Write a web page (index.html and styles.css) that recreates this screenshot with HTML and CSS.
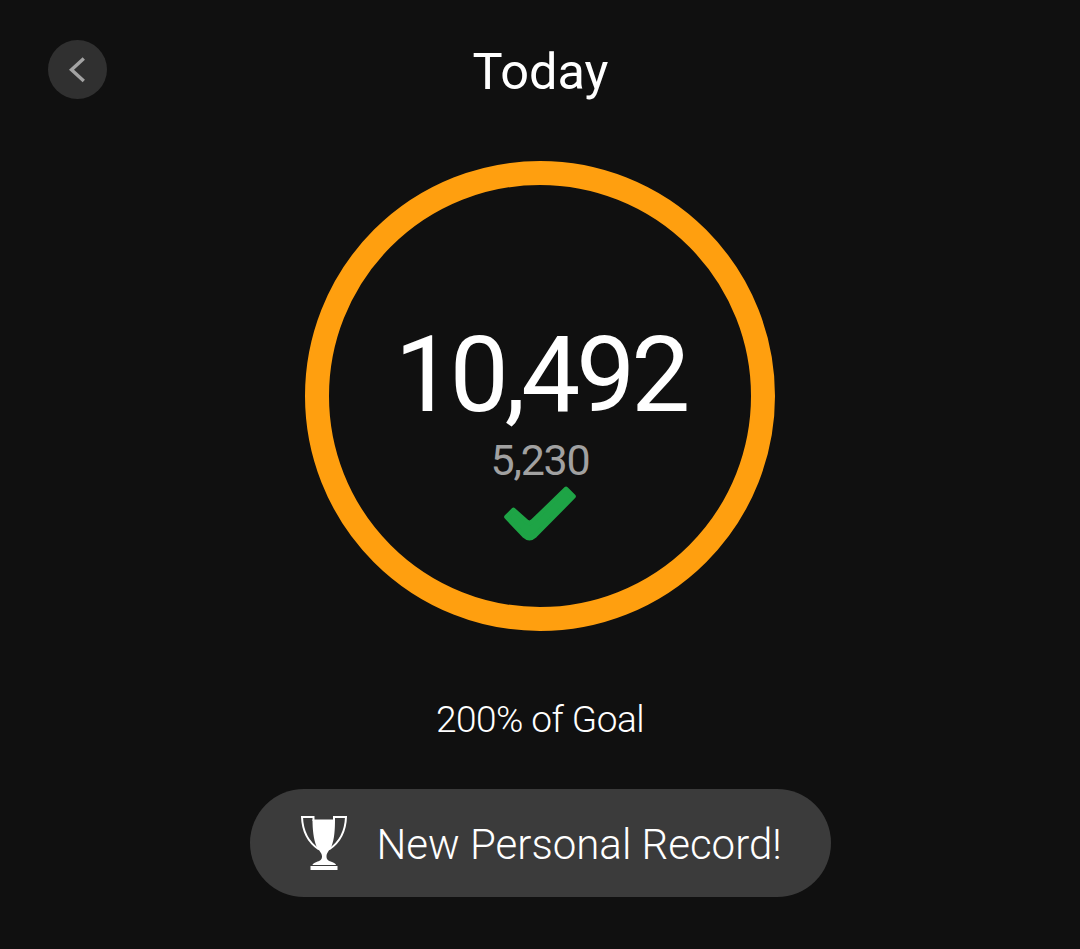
FILE: index.html
```html
<!DOCTYPE html>
<html lang="en">
<head>
    <meta charset="UTF-8">
    <meta name="viewport" content="width=device-width, initial-scale=1.0">
    <title>Today</title>
    <link rel="stylesheet" href="styles.css">
</head>
<body>
    <header class="header">
        <button class="back-button" aria-label="Back">
            <svg width="59" height="59" viewBox="0 0 59 59">
                <path d="M35.8 18.5L23.5 29.8L35.8 41" fill="none" stroke="#a3a3a3" stroke-width="3.4"/>
            </svg>
        </button>
        <h1 class="title">Today</h1>
    </header>

    <main class="content">
        <div class="ring">
            <div class="steps">10,492</div>
            <div class="goal">5,230</div>
            <svg class="check" width="74" height="56" viewBox="0 0 74 56">
                <path d="M3.5 31L10.5 24L24 36Q27 38 30 35L63 3L70.5 10.5L32 49.5Q26.5 54.5 21 49.5Z" fill="#1ea446" stroke="#1ea446" stroke-width="4.6" stroke-linejoin="round"/>
            </svg>
        </div>

        <p class="percent">200% of Goal</p>

        <div class="record">
            <svg class="trophy" width="48" height="56" viewBox="0 0 48 56">
                <path d="M12.5 4.5H35C35 14 34.5 24 31.5 31.5C29.5 35.5 26.5 37.5 26.5 41.5C26.5 45 29 46 32 47C34.5 48 36 49 36 50H12.5C12.5 49 14 48 16.5 47C19.5 46 22 45 22 41.5C22 37.500 18.500 35.500 16.500 31.500C13.500 24 12.500 14 12.500 4.500Z" fill="#fff"/>
                <path d="M13.5 6V2H2C2.500 16 7 26.500 19 34.500" fill="none" stroke="#fff" stroke-width="2"/>
                <path d="M34 6V2H46C45.500 16 41 26.500 29 34.500" fill="none" stroke="#fff" stroke-width="2"/>
                <rect x="10.5" y="51" width="27" height="4" fill="#fff"/>
            </svg>
            <span class="record-text">New Personal Record!</span>
        </div>
    </main>
</body>
</html>
```
FILE: styles.css
```css
* {
    margin: 0;
    padding: 0;
    box-sizing: border-box;
}

body {
    min-height: 100vh;
    padding-top: 40px;
    font-family: Roboto, sans-serif;
    background-color: #101010;
    color: #fff;
}

.header {
    display: grid;
    grid-template-columns: 59px 1fr 59px;
    height: 59px;
    padding: 0 48px;
}

.back-button {
    width: 59px;
    height: 59px;
    border: none;
    border-radius: 50%;
    background-color: #303030;
}

.back-button svg {
    display: block;
}

.title {
    padding: 2px 0 0 1px;
    font-size: 50.5px;
    font-weight: 400;
    line-height: 60px;
    text-align: center;
}

.content {
    display: flex;
    flex-direction: column;
    align-items: center;
    padding-top: 62px;
}

.ring {
    display: flex;
    flex-direction: column;
    align-items: center;
    width: 470px;
    height: 470px;
    padding-top: 136px;
    border: 24px solid #ff9f0f;
    border-radius: 50%;
}

.steps {
    padding-left: 1px;
    font-size: 105px;
    line-height: 110px;
    letter-spacing: -4px;
}

.goal {
    margin-top: 4px;
    font-size: 43px;
    font-weight: 400;
    line-height: 50px;
    letter-spacing: -1.2px;
    color: #a1a1a1;
}

.check {
    display: block;
    margin-top: 1px;
}

.percent {
    margin-top: 64px;
    font-size: 37px;
    font-weight: 300;
    line-height: 50px;
    letter-spacing: -0.5px;
}

.record {
    display: flex;
    align-items: center;
    width: 581px;
    height: 108px;
    margin-top: 44px;
    padding-left: 50px;
    border-radius: 54px;
    background-color: #3b3b3b;
}

.record-text {
    margin-left: 29px;
    padding-top: 4px;
    font-size: 42px;
    font-weight: 300;
    line-height: 50px;
    white-space: nowrap;
}
```
